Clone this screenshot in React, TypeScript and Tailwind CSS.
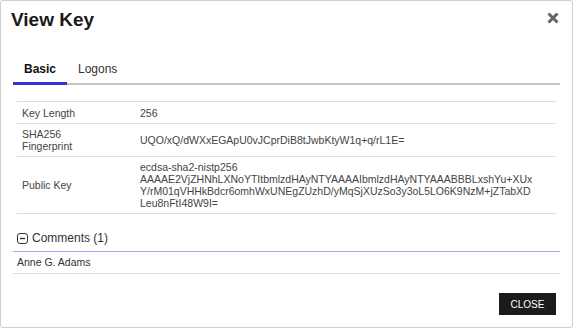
import React from "react";

const rows: { label: string[]; value: string[] }[] = [
  { label: ["Key Length"], value: ["256"] },
  { label: ["SHA256", "Fingerprint"], value: ["UQO/xQ/dWXxEGApU0vJCprDiB8tJwbKtyW1q+q/rL1E="] },
  {
    label: ["Public Key"],
    value: [
      "ecdsa-sha2-nistp256",
      "AAAAE2VjZHNhLXNoYTItbmlzdHAyNTYAAAAIbmlzdHAyNTYAAABBBLxshYu+XUx",
      "Y/rM01qVHHkBdcr6omhWxUNEgZUzhD/yMqSjXUzSo3y3oL5LO6K9NzM+jZTabXD",
      "Leu8nFtI48W9I=",
    ],
  },
];

export default function App() {
  return (
    <div className="h-[329px] w-[574px] bg-white font-['Liberation_Sans',Arial,sans-serif]">
      <div className="flex h-[328px] w-[573px] flex-col rounded-[3px] border border-[#cfcfcf] bg-white">
        {/* header */}
        <div className="flex items-start justify-between pl-[10px] pr-[13px] pt-[8px]">
          <h1 className="text-[19px] font-bold leading-[22px] text-[#1a1a1a]">View Key</h1>
          <button className="mt-[3px] text-[#666]" aria-label="Close">
            <svg width="12" height="12" viewBox="0 0 12 12">
              <path d="M1.5 1.5 L10.5 10.5 M10.5 1.5 L1.5 10.5" stroke="currentColor" strokeWidth="3" />
            </svg>
          </button>
        </div>

        {/* tabs */}
        <div className="mx-[12px] mt-[31px] flex border-b-2 border-[#c4c4c4] text-[12px] leading-[14px]">
          <div className="-mb-[2px] w-[54px] border-b-[3px] border-[#3333e0] pb-[6px] text-center font-bold text-[#111]">
            Basic
          </div>
          <div className="ml-[11px] pb-[6px] text-[#333]">Logons</div>
        </div>

        {/* table */}
        <div className="mx-[16px] mt-[16px] border-t border-[#dedede] text-[10.5px] leading-[12px] text-[#444]">
          {rows.map((r) => (
            <div key={r.label[0]} className="flex min-h-[22px] items-center border-b border-[#dedede] py-[4px]">
              <div className="w-[118px] pl-[5px]">
                {r.label.map((l) => (
                  <div key={l}>{l}</div>
                ))}
              </div>
              <div className="flex-1 pl-[5px]">
                {r.value.map((v) => (
                  <div key={v}>{v}</div>
                ))}
              </div>
            </div>
          ))}
        </div>

        {/* comments */}
        <div className="mx-[12px] mt-[17px]">
          <div className="flex items-center gap-[4px] border-b border-[#a8a8ee] pb-[6px] pl-[4px] text-[12px] leading-[14px] text-[#333]">
            <svg width="11" height="11" viewBox="0 0 11 11">
              <rect x="0.5" y="0.5" width="10" height="10" rx="2.5" fill="none" stroke="#333" />
              <path d="M3 5.5 H8" stroke="#333" strokeWidth="1.4" />
            </svg>
            Comments (1)
          </div>
          <div className="border-b border-[#dedede] py-[4px] pl-[4px] text-[10.5px] leading-[13px] text-[#333]">
            Anne G. Adams
          </div>
        </div>

        <div className="mt-auto flex justify-end pb-[12px] pr-[16px]">
          <button className="h-[22px] w-[57px] bg-[#1b1b1b] text-[10px] text-white">CLOSE</button>
        </div>
      </div>
    </div>
  );
}
